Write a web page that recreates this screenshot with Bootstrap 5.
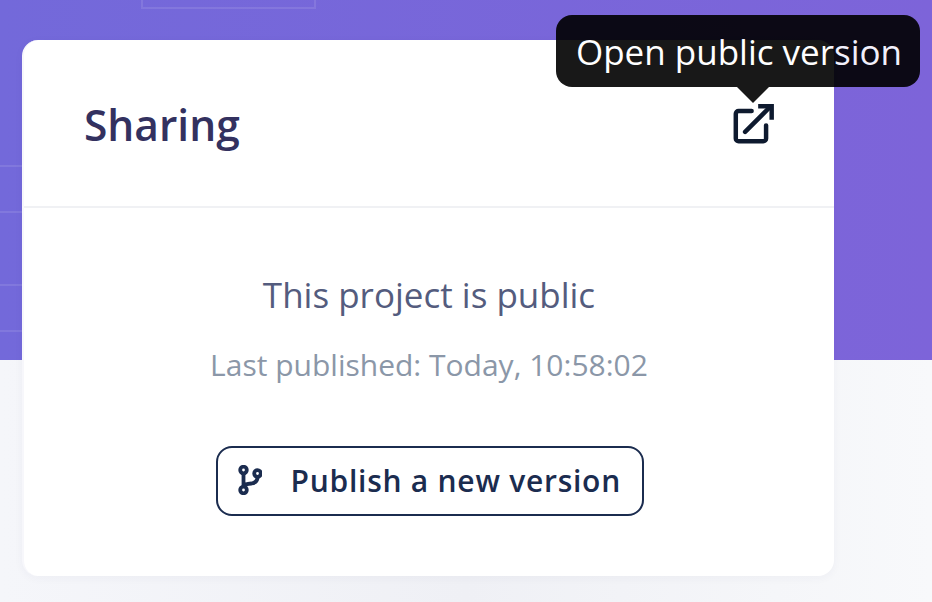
<!DOCTYPE html>
<html lang="en">
<head>
    <meta charset="UTF-8">
    <meta name="viewport" content="width=device-width, initial-scale=1.0">
    <title>Sharing</title>
    <link href="https://cdn.jsdelivr.net/npm/bootstrap@5.3.0/dist/css/bootstrap.min.css" rel="stylesheet">
    <style>
        html, body { height: 100%; overflow: hidden; }
        body {
            font-family: "Open Sans", "Liberation Sans", sans-serif;
            background: linear-gradient(90deg, #f5f6fa, #eff0f5 50%, #f8f9fb);
        }
        .hero-bg {
            position: absolute; top: 0; left: 0; right: 0; height: 360px;
            background: linear-gradient(90deg, #7369da, #7d64d9);
        }
        .hero-box {
            position: absolute; top: -10px; left: 141px; width: 175px; height: 19px;
            border: 2px solid rgba(255,255,255,.1);
        }
        .hero-line {
            position: absolute; left: 0; width: 24px; height: 2px;
            background: rgba(255,255,255,.1);
        }
        .share-wrap { position: relative; padding: 40px 98px 0 22px; }
        .share-card {
            height: 536px; border: 0; border-left: 2px solid #f7f7fb;
            border-radius: 16px; box-shadow: 0 2px 10px rgba(40,40,90,.04);
        }
        .share-head {
            height: 168px; padding: 4px 60px 0 60px; background: transparent;
            border-bottom: 2px solid #f0f1f4;
        }
        .share-title { margin: 0; font-size: 42.500px; font-weight: 600; line-height: 1; color: #33315f; }
        .open-btn { position: relative; display: block; color: #0e1a2f; line-height: 0; margin-top: -3px; }
        .share-status { margin: 65px 0 0; font-size: 35px; line-height: 44px; color: #545c7e; }
        .share-date { margin: 28px 0 0; font-size: 30px; line-height: 40px; color: #8b97a8; }
        .publish-btn {
            width: 428px; height: 70px; margin-top: 61px; margin-left: 2px; padding: 0 21px 2px 20px;
            border: 2px solid #1b2c4f; border-radius: 16px; background: #fff;
            color: #1b2c4f; font-size: 30px; font-weight: 600; letter-spacing: .75px;
        }
        .tip-box { position: absolute; top: 15px; left: 556px; padding: 0; }
        .tip-box .tooltip-inner {
            width: 364px; max-width: none; height: 72px; padding: 0 0 0 2px;
            display: flex; align-items: center; justify-content: center;
            border-radius: 16px; font-family: "Open Sans", sans-serif;
            font-size: 35px; line-height: 1; color: #fff;
        }
        .tip-box .tooltip-arrow { position: absolute; left: 181px; bottom: -16px; width: 32px; height: 16px; }
        .tip-box .tooltip-arrow::before { top: 0; border-width: 16px 16px 0; border-top-color: #000; }
    </style>
</head>
<body>
    <div class="hero-bg">
        <div class="hero-box"></div>
        <div class="hero-line" style="top: 165px"></div>
        <div class="hero-line" style="top: 211px"></div>
        <div class="hero-line" style="top: 284px"></div>
        <div class="hero-line" style="top: 330px"></div>
    </div>

    <div class="share-wrap">
        <div class="card share-card">
            <div class="card-header share-head d-flex justify-content-between align-items-center">
                <h2 class="share-title">Sharing</h2>
                <a class="open-btn" href="#" aria-label="Open public version">
                    <svg width="41" height="41" viewBox="0 0 44 44" fill="none" stroke="currentColor" stroke-width="4.800" stroke-linecap="round" stroke-linejoin="round">
                        <path d="M20 8.500H6a3 3 0 0 0-3 3V38a3 3 0 0 0 3 3h26.500a3 3 0 0 0 3-3V24"/>
                        <path d="M13 31 40 4" />
                        <path d="M27 3.500h14.500V18" stroke-linecap="butt" stroke-linejoin="miter"/>
                    </svg>
                </a>
            </div>
            <div class="card-body p-0 text-center">
                <p class="share-status">This project is public</p>
                <p class="share-date">Last published: Today, 10:58:02</p>
                <button class="btn publish-btn d-inline-flex align-items-center justify-content-between" type="button">
                    <svg width="24" height="30" viewBox="0 0 24 30" fill="none" stroke="currentColor" stroke-width="3.800">
                        <circle cx="5.500" cy="5" r="3.300"/>
                        <circle cx="5.500" cy="25" r="3.300"/>
                        <circle cx="19.500" cy="8.500" r="3.300"/>
                        <path d="M5.500 8.500v13M19.500 12c0 5-3 6-6 6.500-4 .5-8 1-8 3"/>
                    </svg>
                    <span>Publish a new version</span>
                </button>
            </div>
        </div>
    </div>

    <div class="tooltip bs-tooltip-top show tip-box" role="tooltip">
        <div class="tooltip-arrow"></div>
        <div class="tooltip-inner">Open public version</div>
    </div>

    <script src="https://cdn.jsdelivr.net/npm/bootstrap@5.3.0/dist/js/bootstrap.bundle.min.js"></script>
</body>
</html>
